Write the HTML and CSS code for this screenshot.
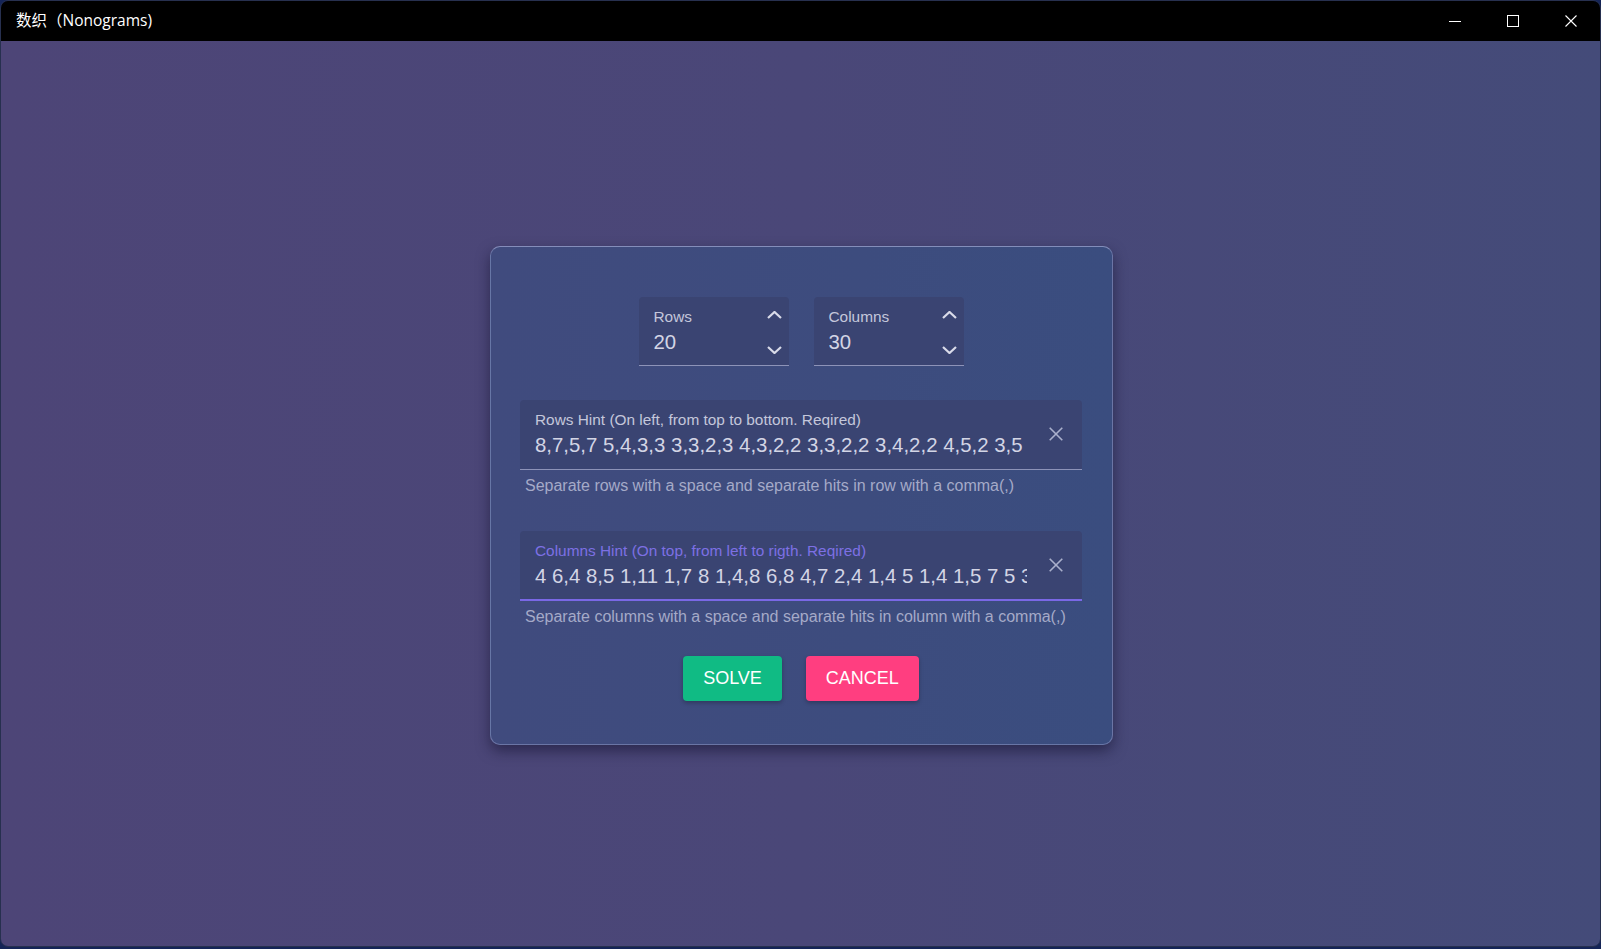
FILE: index.html
```html
<!DOCTYPE html>
<html lang="zh">
<head>
<meta charset="utf-8">
<title>数织（Nonograms)</title>
<link rel="stylesheet" href="styles.css">
</head>
<body>
<div class="window">
  <div class="titlebar">
    <span class="title">数织（Nonograms)</span>
    <div class="controls">
      <div class="cap-btn">
        <svg width="12" height="12" viewBox="0 0 12 12"><path d="M0 6.5H12" stroke="#fff" stroke-width="1"/></svg>
      </div>
      <div class="cap-btn">
        <svg width="12" height="12" viewBox="0 0 12 12"><rect x="0.5" y="0.5" width="11" height="11" fill="none" stroke="#fff" stroke-width="1"/></svg>
      </div>
      <div class="cap-btn">
        <svg width="12" height="12" viewBox="0 0 12 12"><path d="M0.5 0.5L11.5 11.5M11.5 0.5L0.5 11.5" stroke="#fff" stroke-width="1.1"/></svg>
      </div>
    </div>
  </div>
  <div class="main">
    <div class="card">
      <div class="num-row">
        <div class="num-field">
          <div class="field-body">
            <div class="label">Rows</div>
            <div class="value">20</div>
          </div>
          <div class="spin">
            <svg class="chev-up" width="15" height="8" viewBox="0 0 15 8"><path d="M1 7L7.5 1L14 7" fill="none" stroke="#d9dbe9" stroke-width="2.2"/></svg>
            <svg class="chev-down" width="15" height="8" viewBox="0 0 15 8"><path d="M1 1L7.5 7L14 1" fill="none" stroke="#d9dbe9" stroke-width="2.2"/></svg>
          </div>
        </div>
        <div class="num-field">
          <div class="field-body">
            <div class="label">Columns</div>
            <div class="value">30</div>
          </div>
          <div class="spin">
            <svg class="chev-up" width="15" height="8" viewBox="0 0 15 8"><path d="M1 7L7.5 1L14 7" fill="none" stroke="#d9dbe9" stroke-width="2.2"/></svg>
            <svg class="chev-down" width="15" height="8" viewBox="0 0 15 8"><path d="M1 1L7.5 7L14 1" fill="none" stroke="#d9dbe9" stroke-width="2.2"/></svg>
          </div>
        </div>
      </div>

      <div class="text-field">
        <div class="field-body">
          <div class="label">Rows Hint (On left, from top to bottom. Reqired)</div>
          <div class="value">8,7,5,7 5,4,3,3 3,3,2,3 4,3,2,2 3,3,2,2 3,4,2,2 4,5,2 3,5</div>
        </div>
        <div class="clear">
          <svg width="14" height="14" viewBox="0 0 14 14"><path d="M0.7 0.7L13.3 13.3M13.3 0.7L0.7 13.3" stroke="#aab0cc" stroke-width="1.6"/></svg>
        </div>
      </div>
      <div class="helper">Separate rows with a space and separate hits in row with a comma(,)</div>

      <div class="text-field focused second">
        <div class="field-body">
          <div class="label">Columns Hint (On top, from left to rigth. Reqired)</div>
          <div class="value">4 6,4 8,5 1,11 1,7 8 1,4,8 6,8 4,7 2,4 1,4 5 1,4 1,5 7 5 3</div>
        </div>
        <div class="clear">
          <svg width="14" height="14" viewBox="0 0 14 14"><path d="M0.7 0.7L13.3 13.3M13.3 0.7L0.7 13.3" stroke="#aab0cc" stroke-width="1.6"/></svg>
        </div>
      </div>
      <div class="helper">Separate columns with a space and separate hits in column with a comma(,)</div>

      <div class="actions">
        <button class="btn btn-solve">SOLVE</button>
        <button class="btn btn-cancel">CANCEL</button>
      </div>
    </div>
  </div>
</div>
</body>
</html>
```
FILE: styles.css
```css
* { box-sizing: border-box; }
html, body { margin: 0; height: 100%; }
body {
  background: #142457;
  overflow: hidden;
  font-family: "Liberation Sans", Arial, sans-serif;
}
.window {
  width: 1601px;
  height: 947px;
  border: 1px solid #27304f;
  border-radius: 8px;
  overflow: hidden;
  display: flex;
  flex-direction: column;
}
.titlebar {
  height: 40px;
  flex-shrink: 0;
  background: #000;
  display: flex;
  align-items: center;
}
.title {
  padding-left: 15px;
  margin-top: -4px;
  color: #fff;
  font-family: "Open Sans", "Noto Sans CJK SC", sans-serif;
  font-size: 15.5px;
}
.controls {
  margin-left: auto;
  display: flex;
  height: 100%;
}
.cap-btn {
  width: 58px;
  height: 40px;
  display: flex;
  align-items: center;
  justify-content: center;
}
.main {
  flex: 1;
  display: flex;
  align-items: center;
  justify-content: center;
  padding: 3px 0 0 2px;
  background: linear-gradient(90deg, #4d4577 0%, #4a4778 50%, #444b79 100%);
}
.card {
  width: 623px;
  padding: 50px 30px 43px 29px;
  border: 1px solid rgba(175, 182, 225, 0.4);
  border-top-color: rgba(190, 196, 235, 0.55);
  border-radius: 10px;
  background: linear-gradient(90deg, #404b7e 0%, #3d4c7e 60%, #3a4d7f 100%);
  box-shadow: 0 6px 14px rgba(18, 16, 45, 0.55);
}
.num-row {
  display: flex;
  justify-content: center;
  gap: 25px;
}
.num-field {
  width: 150px;
  height: 69px;
  background: #3a4472;
  border-bottom: 1px solid #8d93b8;
  border-radius: 4px 4px 0 0;
  display: flex;
  padding: 11px 7px 0 15px;
}
.field-body { flex: 1; min-width: 0; }
.label {
  font-size: 15.4px;
  line-height: 17px;
  color: #c4c7db;
  white-space: nowrap;
}
.value {
  font-size: 20.4px;
  line-height: 24px;
  margin-top: 5px;
  color: #d3d5e5;
  white-space: nowrap;
  overflow: hidden;
}
.spin {
  display: flex;
  flex-direction: column;
}
.chev-up { margin-top: 3px; }
.chev-down { margin-top: 27px; }
.text-field {
  margin-top: 34px;
  height: 70px;
  background: #3a4472;
  border-bottom: 1px solid #8d93b8;
  border-radius: 4px 4px 0 0;
  display: flex;
  padding-left: 15px;
}
.text-field .field-body {
  flex: none;
  width: 495px;
  padding-top: 11px;
}
.text-field .value { width: 492px; }
.text-field.second { margin-top: 37px; }
.text-field.focused { border-bottom: 2px solid #7a68e6; }
.text-field.focused .label { color: #7d70e4; }
.clear {
  flex: 1;
  display: flex;
  align-items: center;
  justify-content: center;
}
.helper {
  margin-top: 7px;
  padding-left: 5px;
  font-size: 16px;
  line-height: 17px;
  color: #a5aac8;
  white-space: nowrap;
}
.actions {
  display: flex;
  justify-content: center;
  gap: 24px;
  margin-top: 31px;
}
.btn {
  height: 45px;
  padding: 0 20px;
  border: none;
  border-radius: 4px;
  color: #fff;
  font-family: "Liberation Sans", Arial, sans-serif;
  font-size: 18px;
  box-shadow: 0 2px 4px rgba(0, 0, 0, 0.25);
}
.btn-solve { background: #10bb84; }
.btn-cancel { background: #ff3e80; }
```
